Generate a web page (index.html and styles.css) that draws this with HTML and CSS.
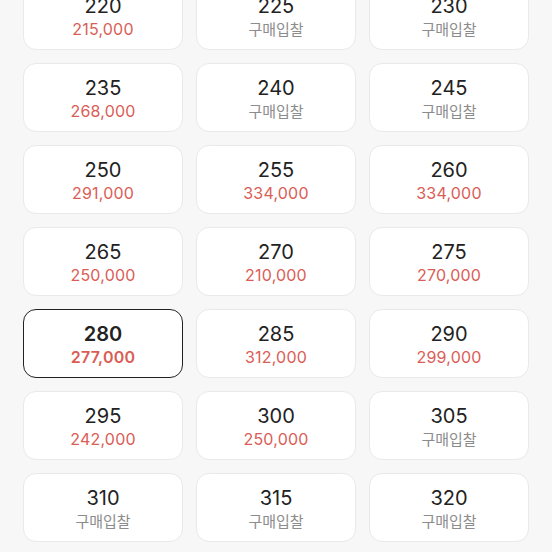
FILE: index.html
```html
<!DOCTYPE html>
<html lang="ko">
  <head>
    <meta charset="UTF-8" />
    <meta name="viewport" content="width=device-width, initial-scale=1.0" />
    <title>사이즈 선택</title>
    <link rel="stylesheet" href="styles.css">
  </head>
  <body>
    <div class="sheet">
      <ul class="size-grid">
        <li class="size-card"><span class="size">220</span><span class="price">215,000</span></li>
        <li class="size-card"><span class="size">225</span><span class="bid">구매입찰</span></li>
        <li class="size-card"><span class="size">230</span><span class="bid">구매입찰</span></li>
        <li class="size-card"><span class="size">235</span><span class="price">268,000</span></li>
        <li class="size-card"><span class="size">240</span><span class="bid">구매입찰</span></li>
        <li class="size-card"><span class="size">245</span><span class="bid">구매입찰</span></li>
        <li class="size-card"><span class="size">250</span><span class="price">291,000</span></li>
        <li class="size-card"><span class="size">255</span><span class="price">334,000</span></li>
        <li class="size-card"><span class="size">260</span><span class="price">334,000</span></li>
        <li class="size-card"><span class="size">265</span><span class="price">250,000</span></li>
        <li class="size-card"><span class="size">270</span><span class="price">210,000</span></li>
        <li class="size-card"><span class="size">275</span><span class="price">270,000</span></li>
        <li class="size-card selected"><span class="size">280</span><span class="price">277,000</span></li>
        <li class="size-card"><span class="size">285</span><span class="price">312,000</span></li>
        <li class="size-card"><span class="size">290</span><span class="price">299,000</span></li>
        <li class="size-card"><span class="size">295</span><span class="price">242,000</span></li>
        <li class="size-card"><span class="size">300</span><span class="price">250,000</span></li>
        <li class="size-card"><span class="size">305</span><span class="bid">구매입찰</span></li>
        <li class="size-card"><span class="size">310</span><span class="bid">구매입찰</span></li>
        <li class="size-card"><span class="size">315</span><span class="bid">구매입찰</span></li>
        <li class="size-card"><span class="size">320</span><span class="bid">구매입찰</span></li>
      </ul>
    </div>
  </body>
</html>
```

FILE: styles.css
```css
html,
body {
  margin: 0;
  height: 100%;
  background: #f7f7f7;
}
body {
  font-family: Inter, "Noto Sans CJK KR", sans-serif;
  overflow: hidden;
}
.sheet {
  height: 552px;
  overflow: hidden;
}
.size-grid {
  list-style: none;
  margin: -19px 0 0;
  padding: 0 23px;
  display: grid;
  grid-template-columns: repeat(3, 160px);
  grid-auto-rows: 69px;
  column-gap: 13px;
  row-gap: 13px;
}
.size-card {
  background: #fff;
  border: 1px solid #e9e9e9;
  border-radius: 13px;
  box-sizing: border-box;
  display: flex;
  flex-direction: column;
  align-items: center;
  justify-content: center;
  padding-top: 2px;
}
.size-card.selected {
  border: 1.5px solid #222;
}
.size {
  font-size: 20px;
  line-height: 24px;
  color: #222;
}
.price {
  font-size: 16px;
  line-height: 22px;
  letter-spacing: 0.2px;
  color: #da5d56;
}
.bid {
  font-family: "Noto Sans CJK KR", sans-serif;
  font-size: 15px;
  line-height: 22px;
  color: #8c8c8c;
}
.selected .size,
.selected .price {
  font-weight: 600;
}
```
